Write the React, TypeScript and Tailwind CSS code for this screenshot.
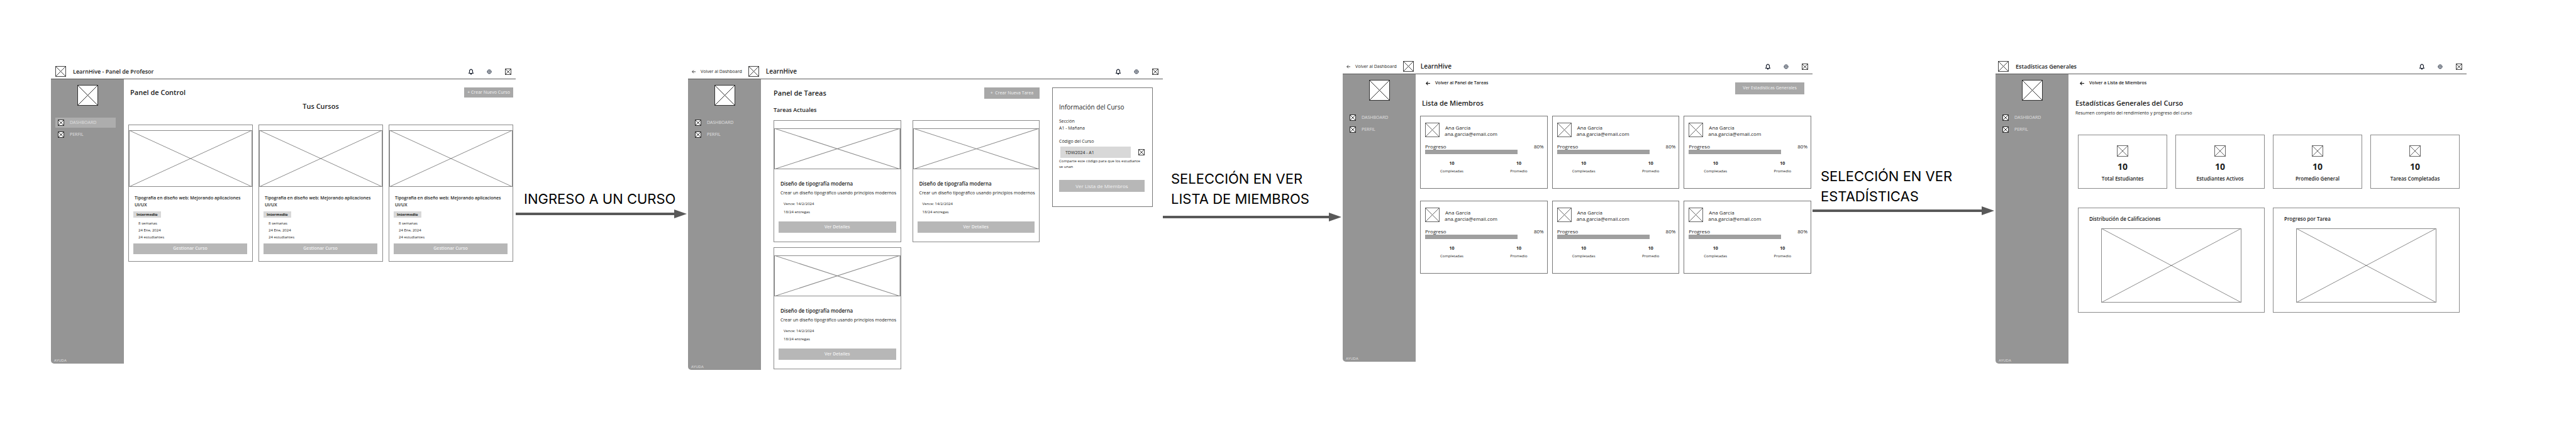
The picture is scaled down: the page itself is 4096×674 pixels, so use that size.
import React from "react";

const cn = (...parts: (string | false | undefined)[]) => parts.filter(Boolean).join(" ");

/* Crossed box that stands in for any image. */
function Placeholder({ className, tone = "#444444" }: { className?: string; tone?: string }) {
  return (
    <svg
      className={cn("block shrink-0 bg-white", className)}
      viewBox="0 0 100 100"
      preserveAspectRatio="none"
      fill="none"
      stroke={tone}
      aria-hidden="true"
    >
      <path d="M0 0L100 100M100 0L0 100" strokeWidth="1" vectorEffect="non-scaling-stroke" />
      <rect width="100" height="100" strokeWidth="2" vectorEffect="non-scaling-stroke" />
    </svg>
  );
}

function BellIcon() {
  return (
    <svg className="block h-[10px] w-[8px]" viewBox="0 0 16 20" fill="none" stroke="#111827" strokeWidth="2.2" strokeLinejoin="round" aria-hidden="true">
      <path d="M1 15h14l-2-3V8a5 5 0 0 0-10 0v4z" />
      <path d="M6 17.5h4" strokeWidth="3" />
      <path d="M8 1v2" />
    </svg>
  );
}

function GearIcon() {
  return (
    <svg className="block h-[8px] w-[8px]" viewBox="0 0 24 24" fill="none" stroke="#374151" aria-hidden="true">
      <circle cx="12" cy="12" r="9.6" strokeWidth="3" strokeDasharray="4.6 1.4" />
      <circle cx="12" cy="12" r="8" strokeWidth="2" />
      <circle cx="12" cy="12" r="3.6" strokeWidth="2.8" />
    </svg>
  );
}

function BackArrow({ className, stroke = 0.9 }: { className?: string; stroke?: number }) {
  return (
    <svg className={cn("block shrink-0", className)} viewBox="0 0 7 7" fill="none" stroke="#111111" strokeWidth={stroke} aria-hidden="true">
      <path d="M7 3.5H0.8M3.4 0.8L0.7 3.5L3.4 6.2" />
    </svg>
  );
}

function TopBar({ title, back, logo }: { title: string; back?: boolean; logo?: string }) {
  return (
    <header className="flex h-6 items-center border-b border-[#5c5c5c] pr-[7px]">
      {back && (
        <a href="#dashboard" className="mr-[10px] ml-[6px] flex items-center gap-2 text-[7px] leading-[10px] whitespace-nowrap">
          <BackArrow className="h-[6px] w-[6px]" />
          Volver al Dashboard
        </a>
      )}
      <Placeholder className={cn("h-[17px] w-[17px]", logo)} />
      <span className={cn("ml-[11px] font-semibold whitespace-nowrap", back ? "text-[10px]" : "text-[9px]")}>{title}</span>
      <div className="ml-auto flex items-center gap-[21px]">
        <button type="button" aria-label="Notificaciones"><BellIcon /></button>
        <button type="button" aria-label="Ajustes"><GearIcon /></button>
        <button type="button" aria-label="Cuenta"><Placeholder className="h-[10px] w-[10px]" /></button>
      </div>
    </header>
  );
}

function Sidebar({ active, className }: { active?: boolean; className: string }) {
  return (
    <aside className={cn("flex w-[116px] shrink-0 flex-col rounded-bl-[5px] bg-[#959595] pt-[9px] text-[#e0e0e0]", className)}>
      <Placeholder className="mx-auto h-[33px] w-[33px]" tone="#333333" />
      <nav className="mt-[19px] mr-[13px] ml-[7px] flex flex-col gap-[3px] text-[7px]">
        <a href="#dashboard" className={cn("flex h-4 items-center gap-[9px] pl-1", active && "bg-[#adadad]")}>
          <Placeholder className="h-[10px] w-[10px]" tone="#333333" />
          DASHBOARD
        </a>
        <a href="#perfil" className="flex h-4 items-center gap-[9px] pl-1">
          <Placeholder className="h-[10px] w-[10px]" tone="#333333" />
          PERFIL
        </a>
      </nav>
      <a href="#ayuda" className="mt-auto pl-[5px] text-[6px] leading-[9px]">AYUDA</a>
    </aside>
  );
}

function Connector({ lines, className, arrowGap }: { lines: string[]; className: string; arrowGap: string }) {
  return (
    <div className={className}>
      <p className="pl-[13px] font-['Inter',sans-serif] text-[22px] leading-8 whitespace-nowrap text-black">
        {lines.map((l) => (
          <span key={l} className="block">{l}</span>
        ))}
      </p>
      <div className={cn("flex items-center pr-[2px]", arrowGap)}>
        <div className="h-1 flex-1 bg-[#595959]" />
        <svg className="block h-[14px] w-5" viewBox="0 0 20 14" fill="#595959" aria-hidden="true">
          <path d="M0 0L20 7L0 14z" />
        </svg>
      </div>
    </div>
  );
}

function CourseCard() {
  return (
    <article className="border border-[#8a8a8a] pb-[11px]">
      <div className="h-2" />
      <Placeholder className="h-[90px] w-full" tone="#8a8a8a" />
      <div className="flex flex-col items-start pt-3 pr-2 pl-[7px]">
        <h3 className="pl-[2px] text-[7px] leading-[11px] font-semibold">Tipografía en diseño web: Mejorando aplicaciones UI/UX</h3>
        <span className="mt-[5px] bg-[#d8d8d8] px-[5px] text-[6px] leading-[10px] font-bold">Intermedio</span>
        <ul className="mt-1 pl-2 text-[6px] leading-[11px]">
          <li>8 semanas</li>
          <li>24 Ene, 2024</li>
          <li>24 estudiantes</li>
        </ul>
        <button type="button" className="mt-1 h-[17px] w-full bg-[#b7b7b7] text-[7px] font-semibold text-[#f2f2f2]">Gestionar Curso</button>
      </div>
    </article>
  );
}

function TaskCard() {
  return (
    <article className="border border-[#8a8a8a] pb-[14px]">
      <div className="h-3" />
      <Placeholder className="h-[65px] w-full" tone="#8a8a8a" />
      <div className="flex flex-col items-start px-[7px] pt-[17px]">
        <h3 className="pl-[3px] text-[8px] leading-3 font-semibold">Diseño de tipografía moderna</h3>
        <p className="mt-[3px] pl-[3px] text-[7px] leading-3 whitespace-nowrap">Crear un diseño tipográfico usando principios modernos</p>
        <ul className="mt-[5px] pl-2 text-[6px] leading-[13px]">
          <li>Vence: 14/2/2024</li>
          <li>18/24 entregas</li>
        </ul>
        <button type="button" className="mt-2 h-[18px] w-full bg-[#b7b7b7] text-[7px] font-semibold text-[#f2f2f2]">Ver Detalles</button>
      </div>
    </article>
  );
}

function CourseInfo() {
  return (
    <section className="self-start border border-[#777777] pt-[23px] pr-3 pb-[23px] pl-[10px] text-[7px] leading-[11px]">
      <h2 className="text-[10px] leading-[14px]">Información del Curso</h2>
      <p className="mt-[10px]">Sección</p>
      <p>A1 - Mañana</p>
      <label htmlFor="codigo" className="mt-[10px] block">Código del Curso</label>
      <div className="mt-[3px] flex items-center justify-between">
        <input id="codigo" readOnly defaultValue="TDW2024 - A1" className="ml-[2px] h-[18px] w-[112px] bg-[#d8d8d8] px-2 text-[7px] outline-none" />
        <button type="button" aria-label="Copiar código"><Placeholder className="h-[10px] w-[10px]" /></button>
      </div>
      <p className="mt-px text-[6px] leading-[9px]">Comparte este código para que los estudiante<br />se unan</p>
      <button type="button" className="mt-4 h-[19px] w-full bg-[#b7b7b7] text-[8px] text-[#f2f2f2]">Ver Lista de Miembros</button>
    </section>
  );
}

function MemberCard() {
  return (
    <article className="border border-[#777777] pt-[10px] pr-[5px] pb-[22px] pl-[7px]">
      <div className="flex items-end gap-2">
        <Placeholder className="h-[23px] w-[23px]" tone="#666666" />
        <div className="text-[8px] leading-[10px]">
          <h3 className="pl-px">Ana García</h3>
          <p>ana.garcia@email.com</p>
        </div>
      </div>
      <div className="mt-[9px] flex justify-between text-[8px] leading-[11px]">
        <span>Progreso</span>
        <span>80%</span>
      </div>
      <div className="h-[7px] w-[78%] bg-[#9f9f9f]" />
      <div className="mt-[10px] flex justify-between pr-[26px] pl-6 text-center text-[6px] leading-[10px]">
        {["Completadas", "Promedio"].map((l) => (
          <div key={l} className="flex flex-col gap-[2px]">
            <strong className="text-[7px] font-bold">10</strong>
            <span>{l}</span>
          </div>
        ))}
      </div>
    </article>
  );
}

function BackLink({ children, className }: { children: string; className: string }) {
  return (
    <a href="#volver" className={cn("flex items-center gap-2 text-[7px] leading-[14px] font-semibold whitespace-nowrap", className)}>
      <BackArrow className="h-[7px] w-[7px]" stroke={1.1} />
      {children}
    </a>
  );
}

const stats = ["Total Estudiantes", "Estudiantes Activos", "Promedio General", "Tareas Completadas"];
const charts = ["Distribución de Calificaciones", "Progreso por Tarea"];

export default function App() {
  return (
    <div className="grid min-h-screen grid-cols-[739fr_274fr_755fr_286fr_747fr_291fr_749fr] items-start bg-white pr-[174px] pb-12 pl-[81px] font-['Open_Sans',sans-serif] text-[#1a1a1a]">
      {/* Panel de profesor */}
      <section className="pt-[102px]">
        <TopBar title="LearnHive - Panel de Profesor" logo="ml-[7px]" />
        <div className="flex">
          <Sidebar active className="min-h-[452px]" />
          <main className="flex-1 pt-[13px] pr-1 pl-[7px]">
            <div className="flex items-center justify-between">
              <h1 className="pl-[3px] text-[11px] leading-4 font-semibold">Panel de Control</h1>
              <button type="button" className="h-4 w-[78px] bg-[#a8a8a8] text-[7px] whitespace-nowrap text-[#f2f2f2]">+ Crear Nuevo Curso</button>
            </div>
            <h2 className="mt-[6px] text-center text-[11px] leading-4 font-semibold">Tus Cursos</h2>
            <div className="mt-[21px] grid grid-cols-3 gap-[9px]">
              {[1, 2, 3].map((i) => <CourseCard key={i} />)}
            </div>
          </main>
        </div>
      </section>

      <Connector lines={["INGRESO A UN CURSO"]} className="pt-[300px]" arrowGap="mt-px" />

      {/* Panel de tareas */}
      <section className="pt-[102px]">
        <TopBar title="LearnHive" back />
        <div className="flex">
          <Sidebar className="min-h-[462px]" />
          <main className="grid flex-1 grid-cols-[minmax(0,1fr)_160px] gap-5 pt-[13px] pr-4 pl-5">
            <div>
              <div className="flex items-center justify-between">
                <h1 className="text-[11px] leading-4 font-semibold">Panel de Tareas</h1>
                <button type="button" className="h-[18px] w-[88px] bg-[#a8a8a8] text-[7px] whitespace-pre text-[#f2f2f2]">{"+  Crear Nueva Tarea"}</button>
              </div>
              <h2 className="mt-[11px] text-[9px] leading-[14px] font-semibold">Tareas Actuales</h2>
              <div className="mt-[9px] grid grid-cols-2 gap-x-[18px] gap-y-2">
                {[1, 2, 3].map((i) => <TaskCard key={i} />)}
              </div>
            </div>
            <CourseInfo />
          </main>
        </div>
      </section>

      <Connector lines={["SELECCIÓN EN VER", "LISTA DE MIEMBROS"]} className="pt-[268px]" arrowGap="mt-[6px]" />

      {/* Lista de miembros */}
      <section className="pt-[94px]">
        <TopBar title="LearnHive" back />
        <div className="flex">
          <Sidebar className="min-h-[457px]" />
          <main className="flex-1 pr-[2px] pl-[7px]">
            <div className="flex items-start justify-between">
              <div className="pt-[7px]">
                <BackLink className="pl-[9px]">Volver al Panel de Tareas</BackLink>
                <h1 className="mt-4 pl-[3px] text-[11px] leading-[18px] font-semibold">Lista de Miembros</h1>
              </div>
              <button type="button" className="mt-[13px] mr-[11px] h-[19px] w-[110px] bg-[#a8a8a8] text-[7px] whitespace-nowrap text-[#f2f2f2]">Ver Estadísticas Generales</button>
            </div>
            <div className="mt-[11px] grid grid-cols-3 gap-x-[7px] gap-y-[19px]">
              {[1, 2, 3, 4, 5, 6].map((i) => <MemberCard key={i} />)}
            </div>
          </main>
        </div>
      </section>

      <Connector lines={["SELECCIÓN EN VER", "ESTADÍSTICAS"]} className="pt-[264px]" arrowGap="mt-0" />

      {/* Estadísticas generales */}
      <section className="pt-[94px]">
        <TopBar title="Estadísticas Generales" logo="ml-1" />
        <div className="flex">
          <Sidebar className="min-h-[460px]" />
          <main className="flex-1 px-[11px] pt-[7px]">
            <BackLink className="pl-[7px]">Volver a Lista de Miembros</BackLink>
            <h1 className="mt-4 text-[11px] leading-[18px] font-semibold">Estadísticas Generales del Curso</h1>
            <p className="mt-[2px] text-[7px] leading-[10px]">Resumen completo del rendimiento y progreso del curso</p>
            <div className="mt-[29px] grid grid-cols-4 gap-[13px] pl-1">
              {stats.map((s) => (
                <article key={s} className="flex flex-col items-center border border-[#8a8a8a] pt-4 pb-[10px]">
                  <Placeholder className="h-[18px] w-[18px]" tone="#666666" />
                  <strong className="mt-2 text-[14px] leading-4 font-bold">10</strong>
                  <span className="mt-[6px] text-[8px] leading-[10px] font-semibold">{s}</span>
                </article>
              ))}
            </div>
            <div className="mt-[30px] grid grid-cols-2 gap-[13px] pl-1">
              {charts.map((c) => (
                <article key={c} className="border border-[#8a8a8a] pt-[11px] pb-[15px]">
                  <h2 className="pl-[17px] text-[8px] leading-3 font-semibold">{c}</h2>
                  <div className="mt-[9px] px-9">
                    <Placeholder className="h-[118px] w-full" tone="#8a8a8a" />
                  </div>
                </article>
              ))}
            </div>
          </main>
        </div>
      </section>
    </div>
  );
}
